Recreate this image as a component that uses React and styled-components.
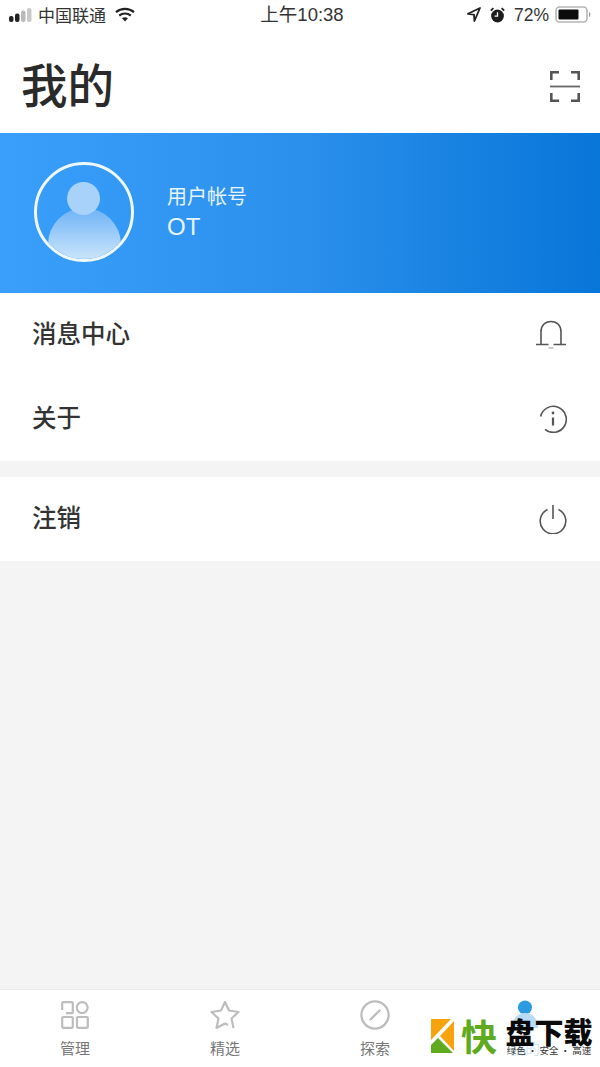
import styled, { createGlobalStyle } from "styled-components"

const GlobalStyle = createGlobalStyle`
    html, body {
        margin: 0;
        padding: 0;
        background: #f4f4f4;
    }

    * { box-sizing: border-box; }
`

const Page = styled.div`
    position: relative;
    width: 600px;
    height: 1067px;
    display: flex;
    flex-direction: column;
    overflow: hidden;
    background: #f4f4f4;
    font-family: "Noto Sans CJK SC", "Liberation Sans", sans-serif;
    color: #2b2b2b;
`

const StatusBar = styled.div`
    height: 33px;
    padding: 0 9px 4px 9px;
    display: grid;
    grid-template-columns: 1fr auto 1fr;
    align-items: center;
    background: #fff;
    color: #333;
`

const StatusSide = styled.div`
    display: flex;
    align-items: center;
    justify-content: ${props => props.$end ? "flex-end" : "flex-start"};
    gap: ${props => props.$gap || 0}px;
`

const Carrier = styled.span`
    margin: 0 9px 0 5px;
    font-size: 17px;
    line-height: 24px;
`

const Clock = styled.span`
    margin-left: 4px;
    font-family: "Liberation Sans", "Noto Sans CJK SC", sans-serif;
    font-size: 18.5px;
    line-height: 24px;
`

const Percent = styled.span`
    margin-right: -3px;
    font-family: "Liberation Sans", sans-serif;
    font-size: 17.5px;
    line-height: 24px;
`

const Header = styled.header`
    height: 100px;
    padding: 0 20px 0 21px;
    display: flex;
    align-items: center;
    justify-content: space-between;
    background: #fff;
`

const Title = styled.h1`
    margin: 0 0 1px;
    font-size: 46.5px;
    line-height: 60px;
    font-weight: 500;
    color: #2a2a2a;
`

const ScanSlot = styled.div`
    display: flex;
    margin-top: 6px;
`

const Banner = styled.section`
    height: 160px;
    padding: 0 34px;
    display: flex;
    align-items: center;
    gap: 33px;
    background: linear-gradient(90deg, #3a9ffb 0%, #2b90ec 50%, #0876d8 100%);
    color: #fff;
`

const Avatar = styled.div`
    position: relative;
    width: 100px;
    height: 100px;
    flex: none;
    margin-top: -2px;
    overflow: hidden;
    border: 3px solid #eef7ff;
    border-radius: 50%;
`

const AvatarHead = styled.div`
    position: absolute;
    top: 17px;
    left: 30px;
    width: 33px;
    height: 33px;
    border-radius: 50%;
    background: #a9d2fb;
`

const AvatarBody = styled.div`
    position: absolute;
    top: 43px;
    left: 11px;
    width: 73px;
    height: 73px;
    border-radius: 50%;
    background: linear-gradient(180deg, #6db3f6 0%, #c4e1fb 65%);
`

const Account = styled.div`
    display: flex;
    flex-direction: column;
    gap: 2px;
    margin-top: -4px;
`

const AccountLabel = styled.span`
    font-size: 20px;
    line-height: 30px;
    color: #e8f4ff;
`

const AccountName = styled.span`
    font-family: "Liberation Sans", sans-serif;
    font-size: 24px;
    line-height: 28px;
    color: #e8f4ff;
`

const Group = styled.section`
    margin-bottom: 16px;
    background: #fff;
`

const Row = styled.div`
    height: 84px;
    padding: 0 33px 0 32px;
    display: flex;
    align-items: center;
    justify-content: space-between;
`

const RowLabel = styled.span`
    margin-bottom: 4px;
    font-size: 24.5px;
    line-height: 34px;
    font-weight: 500;
    color: #333;
`

const Spacer = styled.div`
    flex: 1;
`

const TabBar = styled.nav`
    height: 78px;
    display: grid;
    grid-template-columns: repeat(4, 150px);
    background: #fff;
    border-top: 1px solid #ececec;
`

const Tab = styled.div`
    padding-top: 10px;
    display: flex;
    flex-direction: column;
    align-items: center;
    gap: 7px;
    font-size: 15px;
    line-height: 22px;
    color: ${props => props.$active ? "#d2e8f7" : "#777"};
`

const TabIcon = styled.div`
    height: 30px;
    display: flex;
    align-items: center;
`

const Watermark = styled.div`
    position: absolute;
    left: 431px;
    top: 1019px;
    display: flex;
    align-items: flex-start;
`

const KuaiChar = styled.span`
    width: 36px;
    margin: -7px 8px 0 7px;
    font-size: 36px;
    line-height: 46px;
    font-weight: 700;
    color: #5faa1e;
`

const WatermarkText = styled.div`
    display: flex;
    flex-direction: column;
    align-items: center;
    width: 88px;
`

const PanName = styled.span`
    font-size: 29px;
    line-height: 25px;
    font-weight: 900;
    color: #0a0a0a;
    white-space: nowrap;
`

const Slogan = styled.span`
    font-size: 9.5px;
    line-height: 12px;
    color: #333;
    white-space: nowrap;
`

function SignalIcon() {
    return (
        <svg width="24" height="16" viewBox="0 0 24 16">
            <rect x="0" y="9" width="4.5" height="6" rx="2" fill="#222" />
            <rect x="6" y="6.5" width="4.5" height="8.5" rx="2" fill="#222" />
            <rect x="12" y="3.5" width="4.5" height="11.5" rx="2" fill="#b9b9b9" />
            <rect x="18" y="1" width="4.5" height="14" rx="2" fill="#c9c9c9" />
        </svg>
    )
}

function WifiIcon() {
    return (
        <svg width="20" height="15" viewBox="0 0 20 15" fill="none" stroke="#222" strokeWidth="2.2">
            <path d="M1 5.2C6 .8 14 .8 19 5.2" />
            <path d="M4.2 8.6c3.3-2.8 8.3-2.8 11.6 0" />
            <path d="M10 14.5 7 11.3c1.7-1.3 4.3-1.3 6 0z" fill="#222" stroke="none" />
        </svg>
    )
}

function LocationIcon() {
    return (
        <svg width="14" height="15" viewBox="0 0 14 15" fill="none" stroke="#222" strokeWidth="1.8">
            <path d="M13 1 1 6.8l6 .8.4 6.4z" strokeLinejoin="round" />
        </svg>
    )
}

function AlarmIcon() {
    return (
        <svg width="15" height="16" viewBox="0 0 15 16">
            <circle cx="7.5" cy="9" r="6.4" fill="#1d1d1d" />
            <path d="M.8 3.6 3.4 1.2M14.2 3.6 11.6 1.2" stroke="#1d1d1d" strokeWidth="1.8" />
            <path d="M7.5 5.2v4H4.6" fill="none" stroke="#fff" strokeWidth="1.3" />
        </svg>
    )
}

function BatteryIcon() {
    return (
        <svg width="36" height="17" viewBox="0 0 36 17">
            <rect x="1" y="1" width="31" height="15" rx="3.5" fill="#fff" stroke="#b5b5b5" strokeWidth="1.6" />
            <rect x="3.5" y="3.5" width="20" height="10" rx="1" fill="#0c0c0c" />
            <path d="M34 6c1 .3 1.4 1.4 1.4 2.5S35 10.7 34 11z" fill="#999" />
        </svg>
    )
}

function ScanIcon() {
    return (
        <svg width="30" height="31" viewBox="0 0 30 31" fill="none" stroke="#555" strokeWidth="2.6">
            <path d="M1.3 9V1.3H9M21 1.3h7.700V9M1.3 22v7.700H9M21 29.700h7.700V22" />
            <path d="M0 15.500h30" stroke="#666" strokeWidth="1.8" />
        </svg>
    )
}

function BellIcon() {
    return (
        <svg width="32" height="30" viewBox="0 0 32 30" fill="none" stroke="#555" strokeWidth="1.6">
            <path d="M6 24V12C6 5.500 10 1.500 16 1.500S26 5.500 26 12v12" />
            <path d="M1 24.500h12.500M18.500 24.500H31" />
            <path d="M13.500 28h5" strokeWidth="1" stroke="#999" />
        </svg>
    )
}

function InfoIcon() {
    return (
        <svg width="28" height="28" viewBox="0 0 28 28" fill="none" stroke="#555" strokeWidth="1.6">
            <path d="M1.600 11.500A13 13 0 1 1 6 24.400" />
            <path d="M14 12.500v8" strokeWidth="2.2" />
            <circle cx="14" cy="8" r="1.4" fill="#555" stroke="none" />
        </svg>
    )
}

function PowerIcon() {
    return (
        <svg width="28" height="30" viewBox="0 0 28 30" fill="none" stroke="#555" strokeWidth="1.6">
            <path d="M8.500 5.500a12.800 12.800 0 1 0 11 0" />
            <path d="M14 1v14" />
        </svg>
    )
}

function ManageIcon() {
    return (
        <svg width="28" height="28" viewBox="0 0 28 28" fill="none" stroke="#bdbdbd" strokeWidth="2.2">
            <path d="M1.200 9V2.200a1 1 0 0 1 1-1h8.600a1 1 0 0 1 1 1v9a1 1 0 0 1-1 1H5" />
            <circle cx="21.200" cy="6.600" r="5.400" />
            <rect x="1.200" y="16" width="10.600" height="10.800" rx="1" />
            <rect x="16" y="16" width="10.800" height="10.800" rx="1" />
        </svg>
    )
}

function StarIcon() {
    return (
        <svg width="30" height="30" viewBox="0 0 30 30" fill="none" stroke="#bdbdbd" strokeWidth="2.2" strokeLinejoin="round">
            <path d="M23.500 28 21.500 18.500 28.500 12 19 10.500 15 2 11 10.500 1.500 12 8.500 18.500 6.500 28 15 23.500 18 25" />
        </svg>
    )
}

function CompassIcon() {
    return (
        <svg width="30" height="30" viewBox="0 0 30 30" fill="none" stroke="#bdbdbd">
            <circle cx="15" cy="15" r="13.600" strokeWidth="2.2" />
            <path d="M10.500 19.500 19.500 10.500" strokeWidth="2.4" strokeLinecap="round" />
        </svg>
    )
}

function MineIcon() {
    return (
        <svg width="28" height="30" viewBox="0 0 28 30">
            <circle cx="14" cy="7.500" r="7" fill="#2a9be0" />
            <path d="M1 28C1 18 7 13 14 13s13 5 13 15z" fill="#b9dcf6" />
        </svg>
    )
}

function LogoMark() {
    return (
        <svg width="23" height="34" viewBox="0 0 23 34">
            <path d="M0 0H20L0 21z" fill="#f7a30d" />
            <path d="M23 2V32L9 17z" fill="#f7a30d" />
            <path d="M0 34V26L7 19 22 34z" fill="#5faa1e" />
        </svg>
    )
}

const menuTop = [
    { label: "消息中心", icon: <BellIcon /> },
    { label: "关于", icon: <InfoIcon /> },
]

const tabs = [
    { label: "管理", icon: <ManageIcon /> },
    { label: "精选", icon: <StarIcon /> },
    { label: "探索", icon: <CompassIcon /> },
    { label: "我的", icon: <MineIcon />, active: true },
]

export default function App() {
    return (
        <Page>
            <GlobalStyle />
            <StatusBar>
                <StatusSide>
                    <SignalIcon />
                    <Carrier>中国联通</Carrier>
                    <WifiIcon />
                </StatusSide>
                <Clock>上午10:38</Clock>
                <StatusSide $end $gap={9}>
                    <LocationIcon />
                    <AlarmIcon />
                    <Percent>72%</Percent>
                    <BatteryIcon />
                </StatusSide>
            </StatusBar>
            <Header>
                <Title>我的</Title>
                <ScanSlot>
                    <ScanIcon />
                </ScanSlot>
            </Header>
            <Banner>
                <Avatar>
                    <AvatarBody />
                    <AvatarHead />
                </Avatar>
                <Account>
                    <AccountLabel>用户帐号</AccountLabel>
                    <AccountName>OT</AccountName>
                </Account>
            </Banner>
            <Group>
                {menuTop.map(item => (
                    <Row key={item.label}>
                        <RowLabel>{item.label}</RowLabel>
                        {item.icon}
                    </Row>
                ))}
            </Group>
            <Group>
                <Row>
                    <RowLabel>注销</RowLabel>
                    <PowerIcon />
                </Row>
            </Group>
            <Spacer />
            <TabBar>
                {tabs.map(tab => (
                    <Tab key={tab.label} $active={tab.active}>
                        <TabIcon>{tab.icon}</TabIcon>
                        {tab.label}
                    </Tab>
                ))}
            </TabBar>
            <Watermark>
                <LogoMark />
                <KuaiChar>快</KuaiChar>
                <WatermarkText>
                    <PanName>盘下载</PanName>
                    <Slogan>绿色 · 安全 · 高速</Slogan>
                </WatermarkText>
            </Watermark>
        </Page>
    )
}
